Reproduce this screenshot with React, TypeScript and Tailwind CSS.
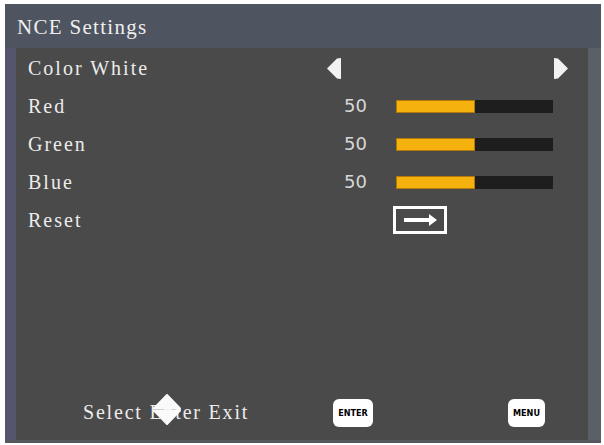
import React from "react";

const serif = "font-['Liberation_Serif','Times_New_Roman',serif]";
const sans = "font-['DejaVu_Sans','Liberation_Sans',sans-serif]";

// Small white arrow used by the Color White selector
const Pointer = ({ dir }: { dir: "left" | "right" }) => (
  <svg width="14" height="21" viewBox="0 0 14 21" className={dir === "right" ? "-scale-x-100" : ""}>
    <polygon points="0,10.5 10,0.5 14,0 14,21 10,20.5" fill="#f2f2f2" />
  </svg>
);

const Slider = ({ value }: { value: number }) => (
  <div className="flex items-center">
    <span className={`${sans} w-[69px] pl-[17px] text-[18px] leading-none text-[#d8d8d8]`}>{value}</span>
    <div className="flex h-[13px] w-[157px] bg-[#1e1e1e]">
      <div className="h-full bg-[#f5b20f] shadow-[inset_0_0_0_1px_#b27808]" style={{ width: `${value}%` }} />
    </div>
  </div>
);

const Row = ({ label, children }: { label: string; children?: React.ReactNode }) => (
  <div className="flex h-[38px] items-center">
    <span className={`${serif} w-[311px] pl-[12px] text-[20px] leading-none tracking-[2px] text-[#ececec]`}>{label}</span>
    {children}
  </div>
);

const KeyCap = ({ label, w }: { label: string; w: string }) => (
  <div className={`${w} flex h-[28px] items-center justify-center rounded-[6px] bg-white`}>
    <span className="font-['DejaVu_Sans_Condensed','DejaVu_Sans',sans-serif] text-[9px] font-bold leading-none text-black">
      {label}
    </span>
  </div>
);

export default function App() {
  const channels = [
    { label: "Red", value: 50 },
    { label: "Green", value: 50 },
    { label: "Blue", value: 50 },
  ];

  return (
    <div className="h-[445px] w-[604px] bg-white pb-[2px] pl-[5px] pr-[3px] pt-[4px]">
      <div className="flex h-full flex-col bg-[#4f5461]">
        {/* Title bar */}
        <div className={`${serif} h-[44px] pl-[12px] pt-[13px] text-[21px] leading-none tracking-[1.3px] text-[#eeeeee]`}>
          NCE Settings
        </div>

        <div className="flex flex-1">
          <div className="w-[11px] bg-[#55566d]" />

          {/* Menu panel */}
          <div className="flex flex-1 flex-col bg-[#4a4a4a] pt-[1px]">
            <Row label="Color White">
              <div className="flex w-[241px] items-center justify-between">
                <Pointer dir="left" />
                <Pointer dir="right" />
              </div>
            </Row>
            {channels.map((c) => (
              <Row key={c.label} label={c.label}>
                <Slider value={c.value} />
              </Row>
            ))}
            <Row label="Reset">
              <div className="ml-[66px] flex h-[28px] w-[54px] items-center justify-center border-[3px] border-white">
                <svg width="36" height="14" viewBox="0 0 36 14">
                  <rect x="2" y="5" width="26" height="4" fill="#fff" />
                  <polygon points="27,1 35,7 27,13" fill="#fff" />
                </svg>
              </div>
            </Row>

            {/* Key hints */}
            <div className="mb-[13px] mt-auto flex h-[28px] items-center">
              <div className="w-[317px] pl-[67px]">
                <span className={`${serif} relative text-[20px] leading-none tracking-[1.8px] text-[#ececec]`}>
                  Select Enter Exit
                  <svg
                    width="28"
                    height="31"
                    viewBox="0 0 28 31"
                    className="absolute left-[70px] top-[-7px]"
                  >
                    <polygon points="1,14.5 14,1 27,14.5" fill="#fafafa" stroke="#fafafa" strokeLinejoin="round" strokeWidth="2" />
                    <polygon points="1,16.5 14,30 27,16.5" fill="#fafafa" stroke="#fafafa" strokeLinejoin="round" strokeWidth="2" />
                  </svg>
                </span>
              </div>
              <KeyCap label="ENTER" w="w-[40px]" />
              <div className="w-[135px]" />
              <KeyCap label="MENU" w="w-[37px]" />
            </div>
          </div>

          <div className="w-[13px] bg-[#5b5f66]" />
        </div>
        <div className="h-[3px] bg-[#55585f]" />
      </div>
    </div>
  );
}
